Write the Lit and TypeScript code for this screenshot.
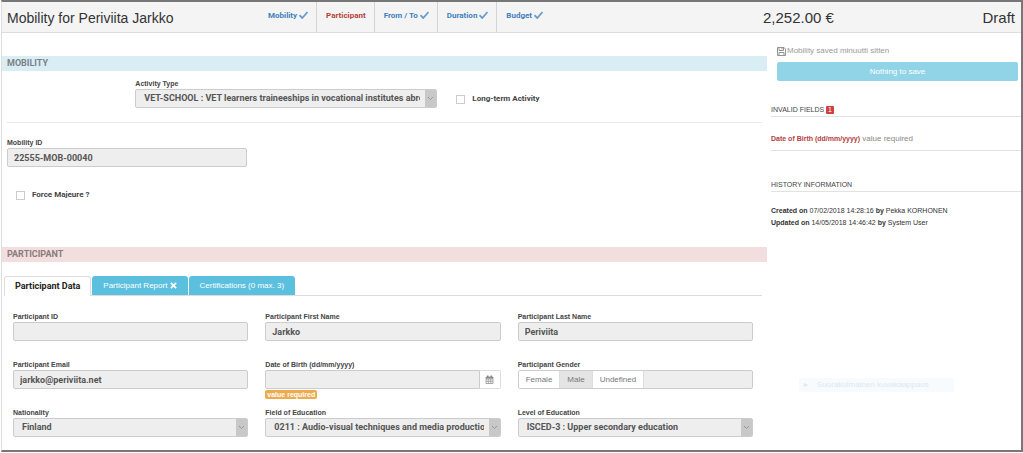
import { LitElement, html, css, svg, nothing } from "lit";
import { customElement, property } from "lit/decorators.js";

const tick = html`<svg class="tick" viewBox="0 0 18 16" width="9" height="8" aria-hidden="true">
  <path d="M1 8.5 L6.5 14 L17 2" fill="none" stroke="currentColor" stroke-width="3.6" />
</svg>`;

const chevron = svg`<path d="M1 1 L3.5 3.5 L6 1" fill="none" stroke="#999" stroke-width="1" />`;

const shared = css`
  :host {
    display: block;
    min-width: 0;
  }
  *,
  *::before,
  *::after {
    box-sizing: border-box;
  }
  .label {
    display: block;
    width: fit-content;
    font-size: 7px;
    line-height: 10px;
    font-weight: 700;
    color: #444;
    white-space: nowrap;
  }
`;

@customElement("form-text")
export class FormText extends LitElement {
  @property() label = "";
  @property() value = "";
  @property() note = "";
  @property({ type: Boolean }) date = false;

  static styles = [
    shared,
    css`
      .row {
        display: flex;
        height: 19px;
      }
      .input {
        flex: 1;
        min-width: 0;
        height: 19px;
        padding: 0 6px;
        border: 1px solid #ccc;
        border-radius: 2px;
        background: #eee;
        color: #555;
        font: 700 9px/17px Roboto, Arial, sans-serif;
      }
      .joined {
        border-radius: 2px 0 0 2px;
      }
      .pick {
        display: grid;
        place-items: center;
        width: 21px;
        padding: 0;
        border: 1px solid #ddd;
        border-left: 0;
        border-radius: 0 2px 2px 0;
        background: #fff;
      }
      .note {
        position: absolute;
        margin-top: 1px;
        padding: 0 2px;
        border-radius: 2px;
        background: #ecab4f;
        color: #fff;
        font-size: 7px;
        line-height: 9px;
        font-weight: 700;
        white-space: nowrap;
      }
    `,
  ];

  render() {
    return html`
      <label class="label" for="box">${this.label}</label>
      <div class="row">
        <input id="box" class="input ${this.date ? "joined" : ""}" .value=${this.value} readonly />
        ${this.date
          ? html`<button class="pick" aria-label="Open calendar">
              <svg viewBox="0 0 18 18" width="9" height="9">
                <path d="M2 4 H16 V17 H2 Z M2 8 H16 M6.5 8 V17 M11.5 8 V17 M2 12.5 H16" fill="none" stroke="#888" stroke-width="1.4" />
                <path d="M2 4 H16 V7 H2 Z M4 1 H7 V5 H4 Z M11 1 H14 V5 H11 Z" fill="#888" />
              </svg>
            </button>`
          : nothing}
      </div>
      ${this.note ? html`<span class="note">${this.note}</span>` : nothing}
    `;
  }
}

@customElement("form-select")
export class FormSelect extends LitElement {
  @property() label = "";
  @property() value = "";

  static styles = [
    shared,
    css`
      .wrap {
        display: flex;
        height: 19px;
        border: 1px solid #ccc;
        border-radius: 2px;
        background: #eee;
        overflow: hidden;
      }
      .select {
        flex: 1;
        min-width: 0;
        appearance: none;
        margin: 0 5px 0 0;
        padding: 0 0 0 8px;
        border: 0;
        background: transparent;
        color: #555;
        font: 700 9px/17px Roboto, Arial, sans-serif;
      }
      .arrow {
        display: grid;
        place-items: center;
        width: 11px;
        background: #c8c8c8;
      }
    `,
  ];

  render() {
    return html`
      <label class="label" for="box">${this.label}</label>
      <div class="wrap">
        <select id="box" class="select">
          <option>${this.value}</option>
        </select>
        <span class="arrow"><svg viewBox="0 0 7 5" width="7" height="5">${chevron}</svg></span>
      </div>
    `;
  }
}

@customElement("app-root")
export class AppRoot extends LitElement {
  static styles = [
    shared,
    css`
      :host {
        min-height: 100vh;
        background: #fff;
        color: #333;
        font-family: "Liberation Sans", Arial, sans-serif;
      }
      .page {
        display: flex;
        flex-direction: column;
        min-height: 100vh;
        padding-bottom: 1px;
      }
      .frame {
        flex: 1;
        margin-left: 1px;
        border: 2px solid #777;
        border-left: 1px solid #ddd;
      }
      .top {
        display: grid;
        grid-template-columns: minmax(0, 254fr) minmax(0, 507fr) minmax(0, 258fr);
        grid-template-rows: minmax(0, 1fr);
        height: 31px;
        border-bottom: 1px solid #ddd;
        background: #f4f4f4;
      }
      .title,
      .amount,
      .state {
        margin: 0;
        font-size: 15px;
        line-height: 32px;
        font-weight: 400;
        white-space: nowrap;
      }
      .title {
        padding-left: 5px;
        font-size: 14px;
      }
      .sum {
        display: flex;
        justify-content: space-between;
        padding-right: 6px;
      }
      .steps {
        display: flex;
      }
      .step {
        padding: 8px 8px 0 9px;
        border-right: 1px solid #d4d4d4;
        color: #3f7fbd;
        font-family: Roboto, Arial, sans-serif;
        font-size: 8px;
        line-height: 12px;
        font-weight: 700;
        text-decoration: none;
        white-space: nowrap;
      }
      .step:first-child {
        padding-left: 12px;
      }
      .step:last-child {
        border-right: 0;
      }
      .current {
        color: #b5403d;
      }
      .tick {
        color: #6b9bcb;
        vertical-align: -1px;
      }
      .body {
        display: grid;
        grid-template-columns: minmax(0, 765fr) minmax(0, 254fr);
      }
      .main {
        padding-top: 23px;
      }
      .band {
        margin: 0;
        padding-left: 5px;
        font-family: Roboto, Arial, sans-serif;
        font-size: 9px;
        line-height: 15px;
        font-weight: 700;
        color: #7b8185;
        background: #d9edf5;
      }
      .invalid {
        background: #f2dede;
        color: #8a7c7c;
      }
      .inset {
        padding: 0 5px;
      }
      .activity {
        display: grid;
        grid-template-columns: 17fr 40fr 43fr;
        padding: 8px 0 14px;
        border-bottom: 1px solid #e8e8e8;
      }
      .activity form-select {
        grid-column: 2;
      }
      .check {
        display: flex;
        align-items: center;
        align-self: start;
        gap: 7px;
        margin: 12px 0 0 19px;
        font-family: Roboto, Arial, sans-serif;
        font-size: 8px;
        line-height: 16px;
        font-weight: 700;
        color: #444;
      }
      .box {
        appearance: none;
        width: 9px;
        height: 9px;
        margin: 0;
        border: 1px solid #ccc;
        background: #fff;
      }
      .mobility {
        width: calc(32% - 2px);
        padding-top: 15px;
      }
      .force {
        margin: 20px 0 44px 9px;
      }
      .tabs {
        display: flex;
        gap: 1px;
        margin: 14px 5px 0 2px;
        border-bottom: 1px solid #ddd;
      }
      .tab {
        height: 19px;
        padding: 0 11px;
        border: 0;
        border-radius: 3px 3px 0 0;
        background: #5bc0de;
        color: #fff;
        font: 8px/19px "Liberation Sans", Arial, sans-serif;
        white-space: nowrap;
      }
      .chosen {
        height: 20px;
        padding: 0 10px;
        margin-bottom: -1px;
        border: 1px solid #ddd;
        border-bottom: 0;
        background: #fff;
        color: #222;
        font-family: Roboto, Arial, sans-serif;
        font-size: 9px;
        font-weight: 700;
      }
      .cross {
        vertical-align: -1px;
      }
      .fields {
        display: grid;
        grid-template-columns: repeat(3, minmax(0, 1fr));
        gap: 19px 17px;
        padding: 16px 14px 13px 11px;
      }
      .group {
        display: flex;
        height: 19px;
        border: 1px solid #ccc;
        border-radius: 2px;
        background: #eee;
      }
      .pick {
        height: 17px;
        padding: 0 7px;
        border: 0;
        border-right: 1px solid #ddd;
        background: #fff;
        color: #777;
        font: 8px/17px "Liberation Sans", Arial, sans-serif;
      }
      .on {
        background: #e4e4e4;
      }
      .side {
        padding: 11px 0 0 4px;
      }
      .saved {
        display: flex;
        align-items: center;
        gap: 1px;
        margin: 0 0 4px 6px;
        color: #999;
        font-size: 8px;
        line-height: 14px;
      }
      .save {
        display: block;
        width: calc(100% - 9px);
        height: 19px;
        margin-left: 6px;
        padding: 0;
        border: 0;
        border-radius: 2px;
        background: #92d4e7;
        color: #fff;
        font: 8px/19px "Liberation Sans", Arial, sans-serif;
      }
      .head {
        margin: 23px 0 0;
        border-bottom: 1px solid #e2e2e2;
        font-size: 7px;
        line-height: 12px;
        font-weight: 400;
        color: #444;
      }
      .count {
        display: inline-block;
        padding: 0 2px;
        border-radius: 1px;
        background: #d04040;
        color: #fff;
        line-height: 8px;
      }
      .error {
        margin: 0;
        padding: 16px 0 5px;
        border-bottom: 1px solid #e2e2e2;
        color: #888;
        font-size: 8px;
        line-height: 12px;
      }
      .error strong {
        color: #b5403d;
        font-size: 7px;
      }
      .history {
        margin-top: 28px;
      }
      .log {
        margin: 13px 0 0;
        font-size: 7px;
        line-height: 12px;
      }
      .faint {
        display: flex;
        gap: 9px;
        width: 155px;
        margin: 149px 0 0 28px;
        padding-left: 5px;
        background: #f7fbfd;
        color: #dfe8ee;
        font-size: 8px;
        line-height: 14px;
      }
    `,
  ];

  render() {
    return html`
      <div class="page">
        <div class="frame">
          <header class="top">
            <h1 class="title">Mobility for Periviita Jarkko</h1>
            <nav class="steps">
              <a class="step" href="#mobility">Mobility ${tick}</a>
              <a class="step current" href="#participant">Participant</a>
              <a class="step" href="#dates">From / To ${tick}</a>
              <a class="step" href="#duration">Duration ${tick}</a>
              <a class="step" href="#budget">Budget ${tick}</a>
            </nav>
            <div class="sum">
              <p class="amount">2,252.00 €</p>
              <p class="state">Draft</p>
            </div>
          </header>
          <div class="body">
            <main class="main">
              <h2 class="band" id="mobility">MOBILITY</h2>
              <div class="inset">
                <div class="activity">
                  <form-select
                    label="Activity Type"
                    value="VET-SCHOOL : VET learners traineeships in vocational institutes abroad"
                  ></form-select>
                  <label class="check"><input class="box" type="checkbox" />Long-term Activity</label>
                </div>
                <form-text class="mobility" label="Mobility ID" value="22555-MOB-00040"></form-text>
                <label class="check force"><input class="box" type="checkbox" />Force Majeure ?</label>
              </div>
              <h2 class="band invalid" id="participant">PARTICIPANT</h2>
              <div class="tabs" role="tablist">
                <button class="tab chosen" role="tab" aria-selected="true">Participant Data</button>
                <button class="tab" role="tab">
                  Participant Report
                  <svg class="cross" viewBox="0 0 16 16" width="7" height="7">
                    <path d="M2 2 L14 14 M14 2 L2 14" stroke="#fff" stroke-width="4" />
                  </svg>
                </button>
                <button class="tab" role="tab">Certifications (0 max. 3)</button>
              </div>
              <div class="fields">
                <form-text label="Participant ID"></form-text>
                <form-text label="Participant First Name" value="Jarkko"></form-text>
                <form-text label="Participant Last Name" value="Periviita"></form-text>
                <form-text label="Participant Email" value="jarkko@periviita.net"></form-text>
                <form-text label="Date of Birth (dd/mm/yyyy)" date note="value required"></form-text>
                <div>
                  <span class="label" id="gender">Participant Gender</span>
                  <div class="group" role="group" aria-labelledby="gender">
                    <button class="pick">Female</button>
                    <button class="pick on" aria-pressed="true">Male</button>
                    <button class="pick">Undefined</button>
                  </div>
                </div>
                <form-select label="Nationality" value="Finland"></form-select>
                <form-select label="Field of Education" value="0211 : Audio-visual techniques and media production"></form-select>
                <form-select label="Level of Education" value="ISCED-3 : Upper secondary education"></form-select>
              </div>
            </main>
            <aside class="side">
              <p class="saved">
                <svg viewBox="0 0 18 18" width="9" height="9">
                  <path d="M1 1 H14 L17 4 V17 H1 Z M4 1 V7 H13 V1 M4 17 V11 H14 V17 M10 2 V5" fill="none" stroke="#888" stroke-width="1.8" />
                </svg>
                Mobility saved minuutti sitten
              </p>
              <button class="save">Nothing to save</button>
              <h3 class="head">INVALID FIELDS <span class="count">1</span></h3>
              <p class="error"><strong>Date of Birth (dd/mm/yyyy)</strong> value required</p>
              <h3 class="head history">HISTORY INFORMATION</h3>
              <p class="log">
                <strong>Created on</strong> 07/02/2018 14:28:16 <strong>by</strong> Pekka KORHONEN<br />
                <strong>Updated on</strong> 14/05/2018 14:46:42 <strong>by</strong> System User
              </p>
              <p class="faint"><span>▸</span><span>Suorakulmainen kuvakaappaus</span></p>
            </aside>
          </div>
        </div>
      </div>
    `;
  }
}
